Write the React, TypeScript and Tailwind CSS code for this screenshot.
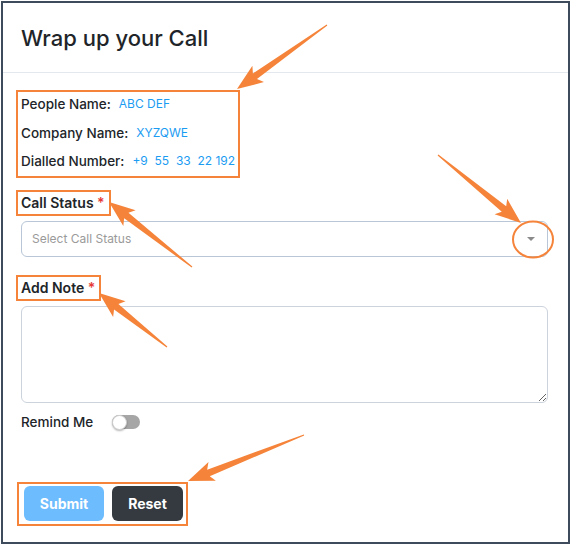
import React from 'react';

const ORANGE = '#f5843a';

type Arrow = { from: [number, number]; to: [number, number] };

// annotation arrows drawn over the form
const arrows: Arrow[] = [
  { from: [327, 25], to: [237, 89] },
  { from: [438, 155], to: [521, 223] },
  { from: [192, 267], to: [109, 202] },
  { from: [167, 347], to: [99, 293] },
  { from: [304, 435], to: [188, 481] },
];

const arrowPoints = ({ from, to }: Arrow) => {
  const [x1, y1] = from;
  const [x2, y2] = to;
  const len = Math.hypot(x2 - x1, y2 - y1);
  const ux = (x2 - x1) / len;
  const uy = (y2 - y1) / len;
  const nx = -uy;
  const ny = ux;
  const headLen = 22;
  const bx = x2 - ux * headLen;
  const by = y2 - uy * headLen;
  const pts: [number, number][] = [
    [x1 + nx * 0.6, y1 + ny * 0.6],
    [bx + nx * 3.5, by + ny * 3.5],
    [bx + nx * 10 - ux * 4, by + ny * 10 - uy * 4],
    [x2, y2],
    [bx - nx * 10 - ux * 4, by - ny * 10 - uy * 4],
    [bx - nx * 3.5, by - ny * 3.5],
    [x1 - nx * 0.6, y1 - ny * 0.6],
  ];
  return pts.map((p) => p.join(',')).join(' ');
};

const InfoRow = ({ label, value }: { label: string; value: string }) => (
  <div className="flex items-center gap-[8px] leading-5">
    <span className="text-[13.5px] font-medium text-[#212529]">{label}</span>
    <span className="text-[12px] text-[#1b9cf2] whitespace-pre">{value}</span>
  </div>
);

const App = () => {
  return (
    <div className="relative w-[571px] h-[546px] bg-white overflow-hidden" style={{ fontFamily: 'Inter, "Noto Sans", sans-serif' }}>
      <div className="ml-[1px] mt-[1px] w-[569px] h-[543px] border-2 border-[#3e4b5c] flex flex-col">
        {/* Header */}
        <div className="h-[70px] pl-[18px] pt-[21px] border-b border-[#e3e8ee]">
          <h1 className="text-[22px] leading-7 font-medium text-[#212529]">Wrap up your Call</h1>
        </div>

        {/* Body */}
        <div className="pl-[18px] pr-[20px] pt-[17px] flex flex-col">
          <div className="-ml-[5px] w-fit border-2 border-[#f5843a] pl-[3px] pr-[3px] pt-[2px] pb-[5px] flex flex-col gap-[8.5px]">
            <InfoRow label="People Name:" value="ABC DEF" />
            <InfoRow label="Company Name:" value="XYZQWE" />
            <InfoRow label="Dialled Number:" value="+9  55  33  22 192" />
          </div>

          <div className="mt-[12px] -ml-[5px] w-fit border-2 border-[#f5843a] pl-[3px] pr-[4px] py-[1px] leading-5 text-[14px] font-semibold text-[#212529]">
            Call Status <span className="text-[#e53935]">*</span>
          </div>

          <div className="mt-[5px] h-[36px] rounded-md border border-[#b8c6d8] flex items-center justify-between pl-[10px] pr-[11px]">
            <span className="text-[12px] text-[#9a9a9a]">Select Call Status</span>
            <svg width="10" height="6" viewBox="0 0 10 6">
              <path d="M1 1 L9 1 L5 5 Z" fill="#8a8a8a" />
            </svg>
          </div>

          <div className="mt-[18px] -ml-[5px] w-fit border-2 border-[#f5843a] pl-[3px] pr-[4px] py-[1px] leading-5 text-[14px] font-semibold text-[#212529]">
            Add Note <span className="text-[#e53935]">*</span>
          </div>

          <textarea className="mt-[5px] h-[97px] w-full rounded-md border border-[#ccd3dd] resize-y outline-none" />

          <div className="mt-[9px] flex items-center gap-[19px]">
            <span className="text-[13.5px] font-medium text-[#212529] leading-5">Remind Me</span>
            <div className="relative w-[28px] h-[14px] rounded-full bg-[#a6a6a6]">
              <div className="absolute left-0 -top-[0.5px] w-[15px] h-[15px] rounded-full bg-white border border-[#d0d0d0] shadow-[0_1px_2px_rgba(0,0,0,0.3)]" />
            </div>
          </div>

          <div className="mt-[50px] -ml-[4px] w-fit border-2 border-[#f5843a] pl-[5px] pr-[3px] pt-[2px] pb-[3px] flex gap-[8px]">
            <button className="w-[80px] h-[35px] rounded-md bg-[#6dbcfd] text-white text-[14px] font-bold">Submit</button>
            <button className="w-[71px] h-[35px] rounded-md bg-[#343a40] text-white text-[14px] font-bold">Reset</button>
          </div>
        </div>
      </div>

      {/* Annotations */}
      <svg className="absolute inset-0 pointer-events-none" width="571" height="546">
        {arrows.map((a, i) => (
          <polygon key={i} points={arrowPoints(a)} fill={ORANGE} />
        ))}
        <ellipse cx="533" cy="239.5" rx="20" ry="18" fill="none" stroke={ORANGE} strokeWidth="2" />
      </svg>
    </div>
  );
};

export default App;
